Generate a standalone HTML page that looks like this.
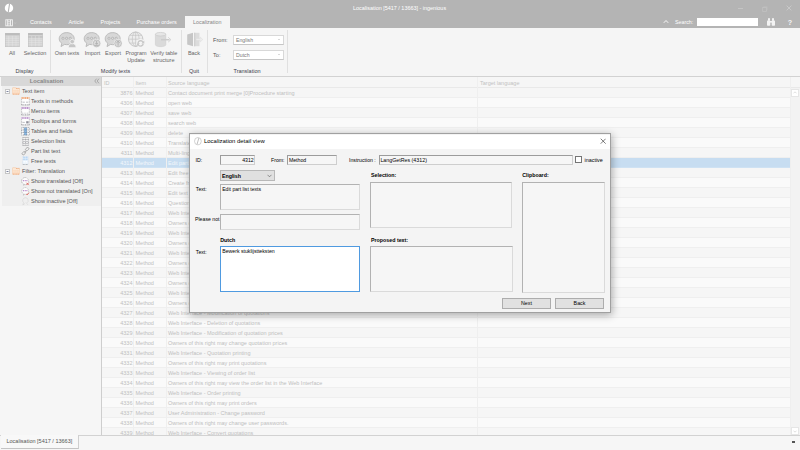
<!DOCTYPE html>
<html><head><meta charset="utf-8"><title>Localisation</title>
<style>
*{box-sizing:border-box;margin:0;padding:0}
html,body{width:800px;height:450px;overflow:hidden;background:#f5f5f5}
body{font-family:"Liberation Sans",sans-serif;font-size:5.5px;color:#444;position:relative;line-height:1}
.a{position:absolute;white-space:nowrap}
#title{left:0;top:0;width:800px;height:27.6px;background:#b4b4b4}
.w{color:#fff}
#ribbon{left:0;top:27.6px;width:800px;height:48.5px;background:#f5f5f5;}
.sep{position:absolute;width:1px;background:#e0e0e0;top:30px;height:43px}
.lbl{position:absolute;white-space:nowrap;text-align:center;transform:translateX(-50%);color:#666;line-height:6.4px}
.grp{position:absolute;white-space:nowrap;text-align:center;transform:translateX(-50%);color:#3c3c4c;top:69.4px}
.combo{position:absolute;background:#fff;border:1px solid #d8d8d8;border-bottom-color:#c6c6c6;height:10px;width:51px;font-size:5.2px;line-height:8px;padding-left:2px;color:#777}
.combo:after{content:"";position:absolute;right:3.2px;top:3.4px;border:1.2px solid transparent;border-top:1.6px solid #b4b4b4}
#side{left:0;top:76px;width:102px;height:359px;background:#f6f6f6;border-right:1px solid #cecece}
#shead{left:1px;top:76.5px;width:100px;height:9px;background:#d8d8d8;color:#878787;font-weight:bold;font-size:5.75px;text-align:center;line-height:9.5px;padding-right:9px}
.t{position:absolute;white-space:nowrap;color:#555;line-height:8px;font-size:5.6px}
.ic{position:absolute}
#tbl{left:102px;top:76px;width:698px;height:359px;background:#f7f7f7;overflow:hidden}
#th{position:absolute;left:102px;top:77px;width:698px;height:11px;background:#f6f6f6;border-bottom:1px solid #e9e9e9;color:#c2c2c2}
.r{position:absolute;left:102px;width:688px;height:10px;background:#f6f6f6;border-bottom:1px solid #efefef;color:#bebebe;line-height:10.4px;font-size:5.5px}
.r.o{background:#fafafa}
.r.s{background:#c7ddf1;color:#f4f8fc;border-bottom-color:#cfe2f3}
.r i,.r b,.r u{position:absolute;top:0;font-style:normal;font-weight:normal;text-decoration:none;white-space:nowrap}
.r i{left:0;width:30.5px;text-align:right}
.r b{left:33.5px}
.r u{left:66px}
.vl{position:absolute;top:77px;width:1px;height:358px;background:#efefef}
#status{left:0;top:435px;width:800px;height:15px;background:#f6f6f6;border-top:1px solid #d2d2d2}
#stab{left:1px;top:435px;width:77.5px;height:13.5px;background:#f8f8f8;border-right:1px solid #cfcfcf;border-bottom:1px solid #c4c4c4;color:#555;line-height:13.6px;padding-left:5.5px}
#dlg{left:189px;top:133px;width:422px;height:179.5px;background:#f4f4f4;border:1px solid #a0a0a0;box-shadow:1px 2px 8px rgba(0,0,0,.32);color:#000}
#din{left:-190px;top:-134px;width:0;height:0}
#dt{left:190px;top:134.5px;width:420px;height:14px;background:#fff}
.f{position:absolute;border:0.8px solid;border-color:#b2b2b2 #dadada #dadada #b2b2b2;background:#f6f6f6;font-size:5.2px;line-height:8.8px;padding-left:0.9px;white-space:nowrap;color:#000}
.dl{position:absolute;white-space:nowrap;font-size:5.2px;color:#000}
.bd{font-weight:bold;font-size:5.3px}
.btn{position:absolute;background:#e1e1e1;border:0.8px solid #adadad;text-align:center;font-size:5.3px;line-height:9.6px;height:10.8px;width:49px;color:#000}
</style></head><body>
<div class="a" id="title"></div>
<!-- logo -->
<svg class="a" style="left:4px;top:3px" width="10" height="10" viewBox="0 0 10 10"><ellipse cx="5" cy="5" rx="4.2" ry="4.3" fill="#fff"/><path d="M5.6 0.5 L4.2 9.5" stroke="#b4b4b4" stroke-width="1.1"/></svg>
<div class="a w" style="left:353px;top:5.8px;font-size:5.45px">Localisation [5417 / 13663] - ingenious</div>
<!-- window controls -->
<div class="a" style="left:738px;top:7.700px;width:5px;height:0.900px;background:#c4c4c4"></div>
<svg class="a" style="left:761.500px;top:5.500px" width="6" height="6" viewBox="0 0 6 6"><path d="M1.600 1.500V0.600H5.300V4.300H4.500" fill="none" stroke="#bdbdbd" stroke-width="0.600"/><rect x="0.700" y="1.600" width="3.700" height="3.700" fill="none" stroke="#c3c3c3" stroke-width="0.700"/></svg>
<svg class="a" style="left:785.500px;top:5px" width="6" height="6" viewBox="0 0 6 6"><path d="M0.600 0.600L5.400 5.400M5.400 0.600L0.600 5.400" stroke="#cfcfcf" stroke-width="0.750"/></svg>
<!-- tabs -->
<svg class="a" style="left:5px;top:18.500px" width="12" height="8" viewBox="0 0 12 8"><rect x="0.800" y="0.800" width="6.600" height="6" fill="none" stroke="#f2f2f2" stroke-width="0.900"/><path d="M2.700 0.800V6.800M5.500 0.800V6.800" stroke="#f6f6f6" stroke-width="0.900"/><path d="M2.700 2.800H5.500M2.700 4.900H5.500" stroke="#f6f6f6" stroke-width="0.800"/><path d="M9.600 3.700l0.600 0.600 0.600-0.600" stroke="#dedede" stroke-width="0.500" fill="none"/></svg>
<div class="a w" style="left:30px;top:19.9px">Contacts</div>
<div class="a w" style="left:68.5px;top:19.9px">Article</div>
<div class="a w" style="left:100.5px;top:19.9px">Projects</div>
<div class="a w" style="left:136.5px;top:19.9px">Purchase orders</div>
<div class="a" style="left:185px;top:16px;width:44.800px;height:12px;background:#f5f5f5"></div>
<div class="a" style="left:193px;top:19.9px;color:#868686;font-size:5.4px">Localization</div>
<svg class="a" style="left:663px;top:19px" width="6" height="5" viewBox="0 0 6 5"><path d="M0.8 3.8L3 1.5L5.2 3.8" stroke="#fff" stroke-width="0.9" fill="none"/></svg>
<div class="a w" style="left:675px;top:19.9px;font-size:5.3px">Search:</div>
<div class="a" style="left:697px;top:17.600px;width:61px;height:8.500px;background:#fff"></div>
<svg class="a" style="left:766px;top:17px" width="10" height="10" viewBox="0 0 10 10"><g fill="#f3f3f3"><rect x="1" y="3.5" width="3.3" height="5.3" rx="0.7"/><rect x="5.7" y="3.5" width="3.3" height="5.3" rx="0.7"/><rect x="2" y="1.2" width="2" height="2.6"/><rect x="6" y="1.2" width="2" height="2.6"/><rect x="4" y="4" width="2" height="1.6"/></g></svg>
<div class="a w" style="left:787.800px;top:18.600px;font-size:7.200px;font-weight:bold;color:#f6f6f6">?</div>

<div class="a" id="ribbon"></div>
<div class="sep" style="left:50px"></div><div class="sep" style="left:181px"></div><div class="sep" style="left:207px"></div><div class="sep" style="left:287px"></div>
<!-- RIBBON-ICONS-START -->
<!-- All -->
<svg class="a" style="left:5px;top:33px" width="15" height="14" viewBox="0 0 15 14"><rect width="14.700" height="14" fill="#d3d3d3"/><rect width="14.700" height="2.700" fill="#bcbcbc"/><path d="M0 2.900H14.700M0 5.200H14.700M0 7.400H14.700M0 9.600H14.700M0 11.800H14.700M3.700 2.900V14M7.350 2.900V14M11 2.900V14" stroke="#e6e6e6" stroke-width="0.500"/><rect x="0.200" y="0.200" width="14.300" height="13.600" fill="none" stroke="#bfbfbf" stroke-width="0.500"/></svg>
<!-- Selection -->
<svg class="a" style="left:27.700px;top:33px" width="15" height="14" viewBox="0 0 15 14"><rect width="14.700" height="14" fill="#d3d3d3"/><rect width="14.700" height="2.500" fill="#bcbcbc"/><rect y="3" width="14.700" height="2.200" fill="#c2c2c2"/><path d="M0 2.700H14.700M0 5.200H14.700M0 7.400H14.700M0 9.600H14.700M0 11.800H14.700M3.700 2.900V14M7.350 2.900V14M11 2.900V14" stroke="#e6e6e6" stroke-width="0.500"/><rect x="0.200" y="0.200" width="14.300" height="13.600" fill="none" stroke="#bfbfbf" stroke-width="0.500"/></svg>
<!-- Own texts -->
<svg class="a" style="left:58px;top:32px" width="19" height="16" viewBox="0 0 19 16"><path d="M8.700 0.600C4.500 0.600 1.200 3.300 1.200 6.700c0 1.900 1 3.500 2.600 4.600L3 14.600l3.600-2.200c.7.200 1.400.300 2.100.300 4.200 0 7.500-2.700 7.500-6S12.900.600 8.700.600z" fill="#d7d7d7" stroke="#b3b3b3" stroke-width="0.800"/><g fill="#e2e2e2" stroke="#9f9f9f" stroke-width="0.550"><circle cx="5" cy="6.300" r="1.100"/><circle cx="8.600" cy="6.300" r="1.100"/><circle cx="12.200" cy="6.300" r="1.100"/></g><g fill="#c6c6c6" stroke="#f5f5f5" stroke-width="0.800"><path d="M10.300 15.700c0-3 1.700-4.200 3.900-4.200s3.900 1.200 3.900 4.200z"/><circle cx="14.200" cy="9.600" r="2.300"/></g></svg>
<!-- Import -->
<svg class="a" style="left:83px;top:32px" width="19" height="16" viewBox="0 0 19 16"><path d="M8.700 0.600C4.500 0.600 1.200 3.300 1.200 6.700c0 1.900 1 3.500 2.600 4.600L3 14.600l3.600-2.200c.7.200 1.400.300 2.100.300 4.200 0 7.500-2.700 7.500-6S12.900.600 8.700.600z" fill="#d7d7d7" stroke="#b3b3b3" stroke-width="0.800"/><g fill="#e2e2e2" stroke="#9f9f9f" stroke-width="0.550"><circle cx="5" cy="6.300" r="1.100"/><circle cx="8.600" cy="6.300" r="1.100"/><circle cx="12.200" cy="6.300" r="1.100"/></g><circle cx="13.600" cy="11.400" r="4" fill="#dadada" stroke="#f5f5f5" stroke-width="0.800"/><circle cx="13.600" cy="11.400" r="3.400" fill="none" stroke="#a9a9a9" stroke-width="0.550"/><path d="M13.600 9v3.200M12.300 11l1.300 1.300 1.300-1.300M11.500 13.400h4.200" stroke="#a0a0a0" stroke-width="0.650" fill="none"/></svg>
<!-- Export -->
<svg class="a" style="left:104px;top:32px" width="19" height="16" viewBox="0 0 19 16"><path d="M8.700 0.600C4.500 0.600 1.200 3.300 1.200 6.700c0 1.900 1 3.500 2.600 4.600L3 14.600l3.600-2.200c.7.200 1.400.300 2.100.300 4.200 0 7.500-2.700 7.500-6S12.900.600 8.700.600z" fill="#d7d7d7" stroke="#b3b3b3" stroke-width="0.800"/><g fill="#e2e2e2" stroke="#9f9f9f" stroke-width="0.550"><circle cx="5" cy="6.300" r="1.100"/><circle cx="8.600" cy="6.300" r="1.100"/><circle cx="12.200" cy="6.300" r="1.100"/></g><circle cx="14.100" cy="11.400" r="4" fill="#dadada" stroke="#f5f5f5" stroke-width="0.800"/><circle cx="14.100" cy="11.400" r="3.400" fill="none" stroke="#a9a9a9" stroke-width="0.550"/><path d="M14.100 9.200v4.500M12.400 10.800l1.700-1.600 1.700 1.600" stroke="#a0a0a0" stroke-width="0.650" fill="none"/></svg>
<!-- Program update -->
<svg class="a" style="left:127px;top:31px" width="19" height="17" viewBox="0 0 19 17"><circle cx="8.700" cy="8.200" r="7.200" fill="#ededed" stroke="#bcbcbc" stroke-width="0.800"/><g fill="none" stroke="#c2c2c2" stroke-width="0.650"><ellipse cx="8.700" cy="8.200" rx="3.400" ry="7.200"/><path d="M8.700 1v14.400M1.500 8.200h14.400M2.700 4.300h12M2.700 12.100h12"/></g><circle cx="13.600" cy="12.300" r="4.300" fill="#f5f5f5"/><path d="M10.300 11.900a3.300 3.300 0 0 1 6-1.500l1-.9v3h-3l1.100-1.100a2 2 0 0 0-3.700.8zM16.900 13a3.300 3.300 0 0 1-6 1.400l-1 .9v-3h3l-1.100 1.100a2 2 0 0 0 3.700-.7z" fill="#c9c9c9"/></svg>
<!-- Verify table structure -->
<svg class="a" style="left:154px;top:31px" width="19" height="17" viewBox="0 0 19 17"><path d="M1.400 3.200v10.600c0 1 2.300 1.900 5.200 1.900s5.200-.9 5.200-1.900V3.200z" fill="#dadada" stroke="#c8c8c8" stroke-width="0.500"/><ellipse cx="6.600" cy="3.200" rx="5.200" ry="1.800" fill="#e6e6e6" stroke="#c4c4c4" stroke-width="0.600"/><path d="M7 8.700h8.500" stroke="#cbcbcb" stroke-width="1.500"/><path d="M14.200 6.300l2.700 2.400-2.700 2.400" stroke="#cbcbcb" stroke-width="0.800" fill="none"/></svg>
<!-- Back -->
<svg class="a" style="left:186px;top:32px" width="18" height="15" viewBox="0 0 18 15"><path d="M1.200 2.400l5.800-1.600v13.400l-5.800-1.600z" fill="#c6c6c6"/><path d="M8 0.800h5.500v13.400H8z" fill="#dcdcdc"/><path d="M8 0.800h1.300v13.400H8z" fill="#d0d0d0"/><path d="M10 6.600h4.200V5l2.600 2.500-2.600 2.500V8.400H10z" fill="#eeeeee" stroke="#d4d4d4" stroke-width="0.400"/></svg>
<!-- RIBBON-ICONS-END -->
<div class="lbl" style="left:12px;top:50.4px">All</div>
<div class="lbl" style="left:35px;top:50.4px">Selection</div>
<div class="lbl" style="left:67px;top:50.4px">Own texts</div>
<div class="lbl" style="left:92.5px;top:50.4px">Import</div>
<div class="lbl" style="left:113px;top:50.4px">Export</div>
<div class="lbl" style="left:136px;top:50.4px">Program<br>Update</div>
<div class="lbl" style="left:163.8px;top:50.4px">Verify table<br>structure</div>
<div class="lbl" style="left:194px;top:50.4px">Back</div>
<div class="grp" style="left:24.5px">Display</div>
<div class="grp" style="left:115.5px">Modify texts</div>
<div class="grp" style="left:194px">Quit</div>
<div class="grp" style="left:247px">Translation</div>
<div class="t" style="left:213px;top:36px">From:</div>
<div class="t" style="left:213px;top:51px">To:</div>
<div class="combo" style="left:233px;top:35px">English</div>
<div class="combo" style="left:233px;top:50px">Dutch</div>

<div class="a" id="side"></div>
<div class="a" style="left:2px;top:85.5px;width:99px;height:120px;background:#efefef"></div>
<div class="a" id="shead">Localisation</div>
<svg class="a" style="left:93.800px;top:78px" width="6" height="6" viewBox="0 0 7 7"><path d="M3 0.800L0.900 3.500L3 6.200M5.800 0.800L3.700 3.500L5.800 6.200" stroke="#8a8a8a" stroke-width="0.700" fill="none"/></svg>
<!-- TREE-ICONS-START -->
<!-- expand boxes -->
<svg class="a" style="left:5px;top:89px" width="5" height="5" viewBox="0 0 5 5"><rect x="0.500" y="0.500" width="4" height="4" fill="#fcfcfc" stroke="#c6c6c6" stroke-width="1"/><path d="M1.500 2.500h2" stroke="#7f86a0" stroke-width="1"/></svg>
<svg class="a" style="left:5px;top:169px" width="5" height="5" viewBox="0 0 5 5"><rect x="0.500" y="0.500" width="4" height="4" fill="#fcfcfc" stroke="#c6c6c6" stroke-width="1"/><path d="M1.500 2.500h2" stroke="#7f86a0" stroke-width="1"/></svg>
<!-- folders -->
<svg class="a" style="left:11.800px;top:87.2px" width="8.500" height="7.800" viewBox="0 0 9 8"><path d="M0.500 1.800V7a.5.5 0 0 0 .5.500h6.500A.5.500 0 0 0 8 7V2a.5.500 0 0 0-.5-.5H4.500L3.800.600H1A.5.500 0 0 0 .5 1.100z" fill="#fde9d7" stroke="#f5c6a0" stroke-width="0.600"/><path d="M0.500 2.800h7.500v4.400h-7.500z" fill="#fbdcc2"/><path d="M4.300 1.300h3.600" stroke="#ee9a66" stroke-width="0.700" stroke-dasharray="1.100 0.500"/><path d="M0.800 2.900h7M0.800 5h7" stroke="#fdf0e4" stroke-width="0.500" stroke-dasharray="1.200 0.600"/><path d="M0.800 7.400h7" stroke="#ee9a66" stroke-width="0.700" stroke-dasharray="1.300 0.500"/></svg>
<svg class="a" style="left:11.800px;top:167.2px" width="8.500" height="7.800" viewBox="0 0 9 8"><path d="M0.500 1.800V7a.5.5 0 0 0 .5.500h6.500A.5.500 0 0 0 8 7V2a.5.500 0 0 0-.5-.5H4.500L3.800.600H1A.5.500 0 0 0 .5 1.100z" fill="#fde9d7" stroke="#f5c6a0" stroke-width="0.600"/><path d="M0.500 2.800h7.500v4.400h-7.500z" fill="#fbdcc2"/><path d="M4.300 1.300h3.600" stroke="#ee9a66" stroke-width="0.700" stroke-dasharray="1.100 0.500"/><path d="M0.800 2.900h7M0.800 5h7" stroke="#fdf0e4" stroke-width="0.500" stroke-dasharray="1.200 0.600"/><path d="M0.800 7.400h7" stroke="#ee9a66" stroke-width="0.700" stroke-dasharray="1.300 0.500"/></svg>
<!-- texts in methods -->
<svg class="a" style="left:20.500px;top:96.800px" width="9" height="9" viewBox="0 0 9 9"><rect x="0.500" y="0.500" width="8" height="7.600" fill="#fdfdfd"/><path d="M0.500 1.100h8" stroke="#f0a878" stroke-width="2" stroke-dasharray="1.300 0.500"/><path d="M0.600 2.200v6M8.300 2.200v6" fill="none" stroke="#8a8a90" stroke-width="0.600" stroke-dasharray="0.900 0.700"/><path d="M0.600 7.900h7.800" stroke="#6c6c74" stroke-width="0.700" stroke-dasharray="1.100 0.600"/><path d="M1.600 5.200h2.200M5 5.200h2.200" stroke="#b9b9c0" stroke-width="0.900"/></svg>
<!-- menu items -->
<svg class="a" style="left:20.500px;top:106.800px" width="9" height="9" viewBox="0 0 9 9"><rect x="0.500" y="0.500" width="8" height="7.600" fill="#fdfdfd"/><path d="M0.500 1.100h8" stroke="#bb93cb" stroke-width="2" stroke-dasharray="1.300 0.500"/><path d="M0.600 2.200v6M8.300 2.200v6" fill="none" stroke="#8a8a90" stroke-width="0.600" stroke-dasharray="0.900 0.700"/><path d="M0.600 7.900h7.800" stroke="#6c6c74" stroke-width="0.700" stroke-dasharray="1.100 0.600"/><path d="M0.900 6.200h7" stroke="#a9a9b0" stroke-width="0.600" stroke-dasharray="1.100 0.600"/></svg>
<!-- tooltips and forms -->
<svg class="a" style="left:20.500px;top:116.800px" width="9" height="9" viewBox="0 0 9 9"><rect x="0.500" y="0.500" width="8" height="7.600" fill="#fdfdfd"/><path d="M0.500 1.100h8" stroke="#c3a0d2" stroke-width="2" stroke-dasharray="1.300 0.500"/><path d="M0.600 2.200v6M8.300 2.200v6" fill="none" stroke="#8a8a90" stroke-width="0.600" stroke-dasharray="0.900 0.700"/><path d="M0.600 7.900h7.800" stroke="#6c6c74" stroke-width="0.700" stroke-dasharray="1.100 0.600"/><path d="M1.400 5.400h2.400" stroke="#b9b9c0" stroke-width="0.900"/><rect x="5.200" y="4.200" width="2.400" height="2.200" fill="#8f8f9a"/></svg>
<!-- tables and fields -->
<svg class="a" style="left:20.500px;top:126.500px" width="9" height="9" viewBox="0 0 9 9"><rect x="0.5" y="0.5" width="8" height="7.600" fill="#fdfdfd"/><rect x="3.100" y="0.600" width="2.800" height="7.600" fill="#86b8e6"/><path d="M0.600 0.600h7.800v7.500H0.600zM0.600 3h7.800M0.600 5.500h7.800M3.100 0.600v7.500M5.900 0.600v7.500" fill="none" stroke="#6f7480" stroke-width="0.6" stroke-dasharray="0.9 0.7"/></svg>
<!-- selection lists -->
<svg class="a" style="left:21.500px;top:136.500px" width="8" height="9" viewBox="0 0 8 9"><rect x="0.6" y="0.4" width="6" height="8" fill="#fafafa"/><path d="M0.800 0.500v8M3.600 0.500v8M6.400 0.500v8M0.800 0.600h5.600M0.800 2.600h5.600M0.800 4.600h5.600M0.800 6.600h5.600M0.800 8.400h5.600" fill="none" stroke="#737378" stroke-width="0.6" stroke-dasharray="0.9 0.6"/></svg>
<!-- part list text (link) -->
<svg class="a" style="left:20.500px;top:146.500px" width="9" height="9" viewBox="0 0 9 9"><g fill="none" stroke="#9b9b9b" stroke-width="0.7"><rect x="4.300" y="0.900" width="3.800" height="2.400" rx="1.200" transform="rotate(-40 6.200 2.100)"/><rect x="0.900" y="5" width="3.800" height="2.400" rx="1.200" transform="rotate(-40 2.800 6.200)"/><path d="M3.300 5.600l2.300-2"/></g></svg>
<!-- free texts -->
<svg class="a" style="left:21.800px;top:156.300px" width="7" height="9" viewBox="0 0 7 9"><rect x="0.800" y="0.500" width="5.200" height="7.800" fill="#fbfdff" stroke="#b9d3ee" stroke-width="0.500" stroke-dasharray="1.100 0.500"/><rect x="1.100" y="0.800" width="4.600" height="3.600" fill="#bcd8f3"/><path d="M3.400 0.500v7.800M0.800 2.500h5.200M0.800 4.500h5.200M0.800 6.400h5.200" stroke="#e6f0fb" stroke-width="0.500"/><path d="M0.800 8.400h5.200" stroke="#8e8e8e" stroke-width="0.600" stroke-dasharray="1.100 0.500"/></svg>
<!-- show translated -->
<svg class="a" style="left:20.500px;top:176.500px" width="9" height="9" viewBox="0 0 9 9"><path d="M4.200 0.600a3.500 3.400 0 1 0 0 6.800L2.400 8.500l.3-1.600" fill="#fff" stroke="#9a9a9a" stroke-width="0.500" stroke-dasharray="1.100 0.500"/><circle cx="4.200" cy="4" r="3.400" fill="#fdfdfd" stroke="#9a9a9a" stroke-width="0.500" stroke-dasharray="1.200 0.500"/><g fill="#b07cc4"><circle cx="2.500" cy="3.700" r="0.600"/><circle cx="4.200" cy="3.700" r="0.600"/><circle cx="5.900" cy="3.700" r="0.600"/></g><path d="M5.400 5.700l2.400 2.400M7.800 5.700L5.400 8.100" stroke="#e0453a" stroke-width="0.700"/></svg>
<!-- show not translated -->
<svg class="a" style="left:20.500px;top:186.500px" width="9" height="9" viewBox="0 0 9 9"><circle cx="4.200" cy="4" r="3.400" fill="#fdfdfd" stroke="#9a9a9a" stroke-width="0.500" stroke-dasharray="1.200 0.500"/><path d="M2.400 8.500l.4-1.600" stroke="#9a9a9a" stroke-width="0.500"/><g fill="#b07cc4"><circle cx="2.500" cy="3.700" r="0.600"/><circle cx="4.200" cy="3.700" r="0.600"/><circle cx="5.900" cy="3.700" r="0.600"/></g><path d="M5.200 6.900l1 1 1.800-2.200" stroke="#e0453a" stroke-width="0.700" fill="none"/></svg>
<!-- show inactive -->
<svg class="a" style="left:20.500px;top:196.500px" width="9" height="9" viewBox="0 0 9 9"><path d="M4.500 0.700a2.800 2.800 0 0 0-2 4.800L1.800 8l2.200-1.500" fill="none" stroke="#cfcfcf" stroke-width="0.500"/><path d="M4.500 0.700a2.800 2.800 0 0 1 1.500 5.100" fill="none" stroke="#cfcfcf" stroke-width="0.500"/><path d="M4.800 5.400l2.300 2.600" stroke="#d8d8d8" stroke-width="0.600"/></svg>
<!-- TREE-ICONS-END -->
<div class="t" style="left:22px;top:87px">Text item</div>
<div class="t" style="left:31px;top:97px">Texts in methods</div>
<div class="t" style="left:31px;top:107px">Menu items</div>
<div class="t" style="left:31px;top:117px">Tooltips and forms</div>
<div class="t" style="left:31px;top:127px">Tables and fields</div>
<div class="t" style="left:31px;top:137px">Selection lists</div>
<div class="t" style="left:31px;top:147px">Part list text</div>
<div class="t" style="left:31px;top:157px">Free texts</div>
<div class="t" style="left:22px;top:167px">Filter: Translation</div>
<div class="t" style="left:31px;top:177px">Show translated [Off]</div>
<div class="t" style="left:31px;top:187px">Show not translated [On]</div>
<div class="t" style="left:31px;top:197px">Show inactive [Off]</div>

<div class="a" id="tbl"></div>
<div id="th"><span class="a" style="left:2px;top:3.5px">ID</span><span class="a" style="left:33.5px;top:3.5px">Item</span><span class="a" style="left:66px;top:3.5px">Source language</span><span class="a" style="left:378px;top:3.5px">Target language</span></div>
<div class="r" style="top:88px"><i>3876</i><b>Method</b><u>Contact document print merge [0]Procedure starting</u></div>
<div class="r o" style="top:98px"><i>4306</i><b>Method</b><u>open web</u></div>
<div class="r" style="top:108px"><i>4307</i><b>Method</b><u>save web</u></div>
<div class="r o" style="top:118px"><i>4308</i><b>Method</b><u>search web</u></div>
<div class="r" style="top:128px"><i>4309</i><b>Method</b><u>delete</u></div>
<div class="r o" style="top:138px"><i>4310</i><b>Method</b><u>Translate texts</u></div>
<div class="r" style="top:148px"><i>4311</i><b>Method</b><u>Multi-lingual texts</u></div>
<div class="r o s" style="top:158px"><i>4312</i><b>Method</b><u>Edit part list texts</u></div>
<div class="r" style="top:168px"><i>4313</i><b>Method</b><u>Edit free texts</u></div>
<div class="r o" style="top:178px"><i>4314</i><b>Method</b><u>Create free texts</u></div>
<div class="r" style="top:188px"><i>4315</i><b>Method</b><u>Edit text items</u></div>
<div class="r o" style="top:198px"><i>4316</i><b>Method</b><u>Question texts</u></div>
<div class="r" style="top:208px"><i>4317</i><b>Method</b><u>Web Interface - Viewing of quotation list</u></div>
<div class="r o" style="top:218px"><i>4318</i><b>Method</b><u>Owners of this right may view the quotation list</u></div>
<div class="r" style="top:228px"><i>4319</i><b>Method</b><u>Web Interface - Creation of quotations</u></div>
<div class="r o" style="top:238px"><i>4320</i><b>Method</b><u>Owners of this right may create quotations</u></div>
<div class="r" style="top:248px"><i>4321</i><b>Method</b><u>Web Interface - Viewing of quotations</u></div>
<div class="r o" style="top:258px"><i>4322</i><b>Method</b><u>Owners of this right may view quotations</u></div>
<div class="r" style="top:268px"><i>4323</i><b>Method</b><u>Web Interface - Copying of quotations</u></div>
<div class="r o" style="top:278px"><i>4324</i><b>Method</b><u>Owners of this right may copy quotations</u></div>
<div class="r" style="top:288px"><i>4325</i><b>Method</b><u>Web Interface - Sending of quotations</u></div>
<div class="r o" style="top:298px"><i>4326</i><b>Method</b><u>Owners of this right may send quotations</u></div>
<div class="r" style="top:308px"><i>4327</i><b>Method</b><u>Web Interface - Modification of quotations</u></div>
<div class="r o" style="top:318px"><i>4328</i><b>Method</b><u>Web Interface - Deletion of quotations</u></div>
<div class="r" style="top:328px"><i>4329</i><b>Method</b><u>Web Interface - Modification of quotation prices</u></div>
<div class="r o" style="top:338px"><i>4330</i><b>Method</b><u>Owners of this right may change quotation prices</u></div>
<div class="r" style="top:348px"><i>4331</i><b>Method</b><u>Web Interface - Quotation printing</u></div>
<div class="r o" style="top:358px"><i>4332</i><b>Method</b><u>Owners of this right may print quotations</u></div>
<div class="r" style="top:368px"><i>4333</i><b>Method</b><u>Web Interface - Viewing of order list</u></div>
<div class="r o" style="top:378px"><i>4334</i><b>Method</b><u>Owners of this right may view the order list in the Web Interface</u></div>
<div class="r" style="top:388px"><i>4335</i><b>Method</b><u>Web Interface - Order printing</u></div>
<div class="r o" style="top:398px"><i>4336</i><b>Method</b><u>Owners of this right may print orders</u></div>
<div class="r" style="top:408px"><i>4337</i><b>Method</b><u>User Administration - Change password</u></div>
<div class="r o" style="top:418px"><i>4338</i><b>Method</b><u>Owners of this right may change user passwords.</u></div>
<div class="r" style="top:428px"><i>4339</i><b>Method</b><u>Web Interface - Convert quotations</u></div>
<div class="vl" style="left:133px"></div><div class="vl" style="left:166px"></div><div class="vl" style="left:477px"></div><div class="vl" style="left:790px"></div>
<!-- scrollbar -->
<div class="a" style="left:791px;top:88px;width:9px;height:347px;background:#f3f3f3"></div>
<div class="a" style="left:791px;top:89px;width:8px;height:7.5px;background:#fff;border:1px solid #e6e6e6"></div><svg class="a" style="left:793px;top:91px" width="4" height="3" viewBox="0 0 4 3"><path d="M0.500 2.300L2 0.800L3.500 2.300" stroke="#c9c9c9" stroke-width="0.600" fill="none"/></svg>
<div class="a" style="left:791px;top:427px;width:8px;height:7.5px;background:#fff;border:1px solid #e6e6e6"></div><svg class="a" style="left:793px;top:429.500px" width="4" height="3" viewBox="0 0 4 3"><path d="M0.500 0.700L2 2.200L3.500 0.700" stroke="#c9c9c9" stroke-width="0.600" fill="none"/></svg>

<div class="a" style="left:0;top:75.5px;width:800px;height:1px;background:#d2d2d2"></div>
<div class="a" id="status"></div>
<div class="a" id="stab">Localisation [5417 / 13663]</div>
<div class="a" style="left:792px;top:441px;width:3px;height:1.5px;background:#555"></div>

<!-- dialog -->
<div class="a" id="dlg"><div class="a" id="din">
<div class="a" id="dt"></div>
<svg class="a" style="left:193.5px;top:137px" width="8" height="8.500" viewBox="0 0 8 8.500"><ellipse cx="3.900" cy="4.200" rx="3.400" ry="3.700" fill="#fff" stroke="#b5b5b5" stroke-width="0.600"/><path d="M4.900 1L3 7.400" stroke="#b0b0b0" stroke-width="0.800"/></svg>
<div class="dl" style="left:204px;top:139px;font-size:5.950px">Localization detail view</div>
<svg class="a" style="left:599.800px;top:137.800px" width="6.400" height="6.400" viewBox="0 0 7 7"><path d="M0.800 0.800L6.200 6.200M6.200 0.800L0.800 6.200" stroke="#333" stroke-width="0.700"/></svg>
<div class="dl" style="left:195.500px;top:158px">ID:</div>
<div class="f" style="border-color:#9c9c9c #cecece #cecece #9c9c9c;left:220px;top:154.800px;width:34.700px;height:10px;text-align:right;padding-right:0">4312</div>
<div class="dl" style="left:271px;top:158px">From:</div>
<div class="f" style="border-color:#9c9c9c #cecece #cecece #9c9c9c;left:287px;top:154.800px;width:50px;height:10px">Method</div>
<div class="dl" style="left:349px;top:158px">Instruction :</div>
<div class="f" style="border-color:#9c9c9c #cecece #cecece #9c9c9c;left:378.500px;top:154.800px;width:194.300px;height:10px;font-size:5.3px">LangGetRes (4312)</div>
<div class="a" style="left:575px;top:156.200px;width:6.800px;height:6.800px;background:#fff;border:0.800px solid #757575"></div>
<div class="dl" style="left:584.500px;top:158px;font-size:5.400px">inactive</div>
<div class="f bd" style="left:220px;top:170.300px;width:55px;height:10.500px;background:#e0e0e0;border-color:#b8b8b8;line-height:10.4px">English<svg class="a" style="right:1.800px;top:3.200px" width="5" height="4" viewBox="0 0 5 4"><path d="M0.500 0.800L2.500 2.800L4.500 0.800" stroke="#555" stroke-width="0.600" fill="none"/></svg></div>
<div class="dl bd" style="left:371px;top:172.800px">Selection:</div>
<div class="dl bd" style="left:522.200px;top:172.800px">Clipboard:</div>
<div class="dl" style="left:195.800px;top:186.9px">Text:</div>
<div class="f" style="left:220.300px;top:183.900px;width:139.400px;height:26.600px;font-size:5.1px">Edit part list texts</div>
<div class="dl" style="left:195px;top:217.20px">Please not</div>
<div class="f" style="left:220.300px;top:214.400px;width:139.400px;height:15.600px"></div>
<div class="f" style="left:369.500px;top:181.600px;width:142.800px;height:46.300px"></div>
<div class="f" style="left:522px;top:181.600px;width:83px;height:111.800px"></div>
<div class="dl bd" style="left:220.300px;top:237.700px">Dutch</div>
<div class="dl bd" style="left:371px;top:237.700px">Proposed text:</div>
<div class="dl" style="left:195.800px;top:250.1px">Text:</div>
<div class="f" style="left:220.300px;top:246.400px;width:139.700px;height:45.600px;background:#fff;border:0.800px solid #4f9ae0">Bewerk stuklijstteksten</div>
<div class="f" style="left:369.700px;top:246.400px;width:143px;height:45.600px"></div>
<div class="btn" style="left:502px;top:298px">Next</div>
<div class="btn" style="left:555px;top:298px">Back</div>
</div></div>
</body></html>
